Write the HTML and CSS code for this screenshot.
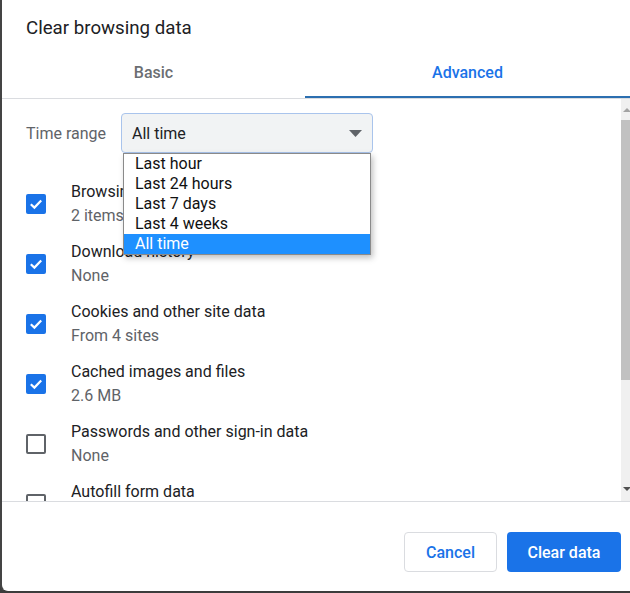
FILE: index.html
```html
<!DOCTYPE html>
<html>
<head>
<meta charset="utf-8">
<link rel="stylesheet" href="styles.css">
</head>
<body>
<div class="dialog">
  <div class="title">Clear browsing data</div>
  <div class="tabs">
    <div class="tab">Basic</div>
    <div class="tab active">Advanced</div>
  </div>
  <div class="body">
    <div class="scroll">
      <div class="range-row">
        <div class="range-label">Time range</div>
        <div class="select-wrap">
          <div class="select">
            <span>All time</span>
            <svg class="caret" width="13" height="7" viewBox="0 0 13 7"><path d="M0 0 H13 L6.5 7 Z" fill="#5f6368"/></svg>
          </div>
          <div class="menu">
            <div class="opt">Last hour</div>
            <div class="opt">Last 24 hours</div>
            <div class="opt">Last 7 days</div>
            <div class="opt">Last 4 weeks</div>
            <div class="opt selected">All time</div>
          </div>
        </div>
      </div>
      <div class="item">
        <div class="box checked"><svg width="20" height="20" viewBox="0 0 20 20"><path d="M4.8 10.2 L8.4 13.6 L15.2 6.6" fill="none" stroke="#fff" stroke-width="2.2"/></svg></div>
        <div class="text"><div class="primary">Browsing history</div><div class="secondary">2 items</div></div>
      </div>
      <div class="item">
        <div class="box checked"><svg width="20" height="20" viewBox="0 0 20 20"><path d="M4.8 10.2 L8.4 13.6 L15.2 6.6" fill="none" stroke="#fff" stroke-width="2.2"/></svg></div>
        <div class="text"><div class="primary">Download history</div><div class="secondary">None</div></div>
      </div>
      <div class="item">
        <div class="box checked"><svg width="20" height="20" viewBox="0 0 20 20"><path d="M4.8 10.2 L8.4 13.6 L15.2 6.6" fill="none" stroke="#fff" stroke-width="2.2"/></svg></div>
        <div class="text"><div class="primary">Cookies and other site data</div><div class="secondary">From 4 sites</div></div>
      </div>
      <div class="item">
        <div class="box checked"><svg width="20" height="20" viewBox="0 0 20 20"><path d="M4.8 10.2 L8.4 13.6 L15.2 6.6" fill="none" stroke="#fff" stroke-width="2.2"/></svg></div>
        <div class="text"><div class="primary">Cached images and files</div><div class="secondary">2.6 MB</div></div>
      </div>
      <div class="item">
        <div class="box"></div>
        <div class="text"><div class="primary">Passwords and other sign-in data</div><div class="secondary">None</div></div>
      </div>
      <div class="item">
        <div class="box"></div>
        <div class="text"><div class="primary">Autofill form data</div><div class="secondary">None</div></div>
      </div>
    </div>
    <div class="scrollbar">
      <div class="arrow up"></div>
      <div class="thumb"></div>
      <div class="arrow down"></div>
    </div>
  </div>
  <div class="footer">
    <button class="btn cancel">Cancel</button>
    <button class="btn primary-btn">Clear data</button>
  </div>
</div>
</body>
</html>
```
FILE: styles.css
```css
html {
  background: #3c3c3c;
}
body {
  margin: 0;
  font-family: Roboto, "Liberation Sans", sans-serif;
}
.dialog {
  width: 628px;
  height: 591px;
  background: #fff;
  border-left: 2px solid #444;
  border-bottom: 2px solid #3c3c3c;
  border-bottom-left-radius: 8px;
  display: flex;
  flex-direction: column;
  overflow: hidden;
}
.title {
  height: 50px;
  box-sizing: border-box;
  padding: 17px 0 0 24px;
  font-size: 18.7px;
  line-height: 22px;
  color: #202124;
}
.tabs {
  display: flex;
  height: 49px;
  border-bottom: 1px solid #dadce0;
  box-sizing: border-box;
}
.tab {
  width: 303px;
  text-align: center;
  font-size: 16px;
  font-weight: 500;
  color: #6b6e72;
  line-height: 46px;
  box-sizing: border-box;
  border-bottom: 2px solid transparent;
}
.tab.active {
  flex: 1;
  color: #1a73e8;
  border-bottom-color: #2c6fb0;
}
.body {
  height: 402px;
  display: flex;
  border-bottom: 1px solid #dadce0;
}
.scroll {
  flex: 1;
  overflow: hidden;
  padding: 14px 0 0 24px;
}
.range-row {
  display: flex;
  align-items: center;
  height: 40px;
  margin-bottom: 21px;
}
.range-label {
  width: 95px;
  font-size: 16px;
  color: #5f6368;
}
.select-wrap {
  position: relative;
  width: 252px;
  height: 40px;
}
.select {
  box-sizing: border-box;
  height: 40px;
  background: #f1f3f4;
  border: 1px solid #a9c4ec;
  border-radius: 4px;
  display: flex;
  align-items: center;
  justify-content: space-between;
  padding: 0 10px 0 10px;
  font-size: 16px;
  color: #202124;
}
.menu {
  position: absolute;
  top: 40px;
  left: 2px;
  width: 248px;
  box-sizing: border-box;
  background: #fff;
  border: 1px solid #8a8a8a;
  box-shadow: 2px 3px 6px rgba(0,0,0,0.25);
  z-index: 2;
}
.opt {
  height: 20px;
  line-height: 20px;
  padding-left: 11px;
  font-size: 16px;
  color: #111;
}
.opt.selected {
  background: #1e90ff;
  color: #fff;
}
.item {
  display: flex;
  align-items: center;
  height: 60px;
}
.box {
  width: 20px;
  height: 20px;
  box-sizing: border-box;
  border: 2px solid #5f6368;
  border-radius: 2px;
  margin-right: 25px;
  flex: none;
}
.box.checked {
  border: none;
  background: #1a73e8;
}
.box svg {
  display: block;
}
.primary {
  font-size: 16px;
  line-height: 24px;
  color: #202124;
}
.secondary {
  font-size: 16px;
  line-height: 24px;
  color: #5f6368;
}
.scrollbar {
  width: 9px;
  background: #f0f0f0;
  display: flex;
  flex-direction: column;
  align-items: center;
}
.arrow {
  width: 0;
  height: 0;
  border-left: 4px solid transparent;
  border-right: 4px solid transparent;
  margin-left: 3px;
}
.arrow.up {
  border-bottom: 4px solid #a3a3a3;
  margin-top: 9px;
  margin-bottom: 8px;
}
.arrow.down {
  border-top: 4px solid #505050;
  margin-top: auto;
  margin-bottom: 10px;
}
.thumb {
  width: 9px;
  height: 260px;
  background: #c1c1c1;
}
.footer {
  flex: 1;
  display: flex;
  justify-content: flex-end;
  align-items: flex-start;
  padding: 30px 9px 0 0;
  gap: 10px;
}
.btn {
  height: 40px;
  border-radius: 4px;
  font-family: Roboto, "Liberation Sans", sans-serif;
  font-size: 16px;
  font-weight: 500;
  padding: 0;
  cursor: pointer;
}
.cancel {
  width: 93px;
  background: #fff;
  color: #1a73e8;
  border: 1px solid #dadce0;
}
.primary-btn {
  width: 114px;
  background: #1a73e8;
  color: #fff;
  border: none;
}
```
